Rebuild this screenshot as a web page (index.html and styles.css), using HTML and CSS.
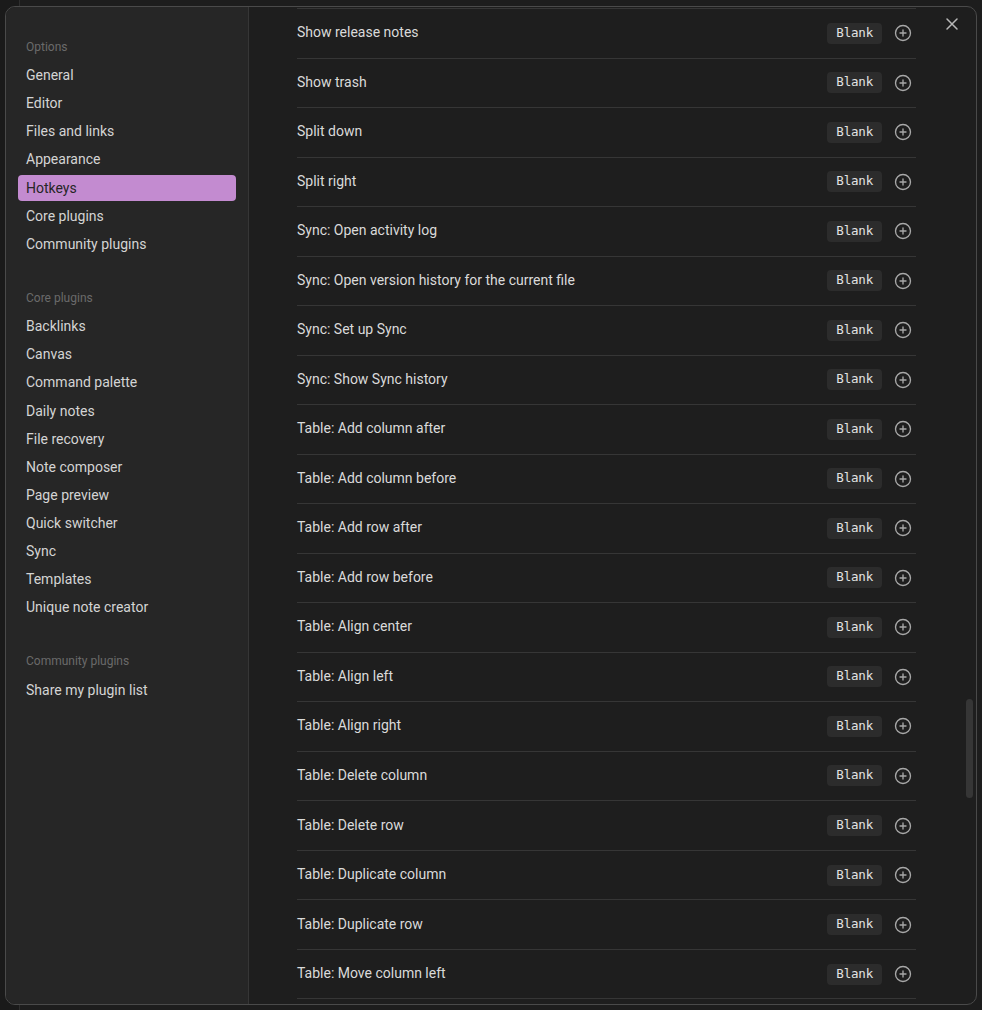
FILE: index.html
```html
<!DOCTYPE html>
<html lang="en">
<head>
<meta charset="utf-8">
<title>Settings - Hotkeys</title>
<link rel="stylesheet" href="styles.css">
</head>
<body>
<div class="modal">
  <nav class="sidebar">
    <div class="nav-group">
      <div class="nav-header">Options</div>
      <div class="nav-item">General</div>
      <div class="nav-item">Editor</div>
      <div class="nav-item">Files and links</div>
      <div class="nav-item">Appearance</div>
      <div class="nav-item is-active">Hotkeys</div>
      <div class="nav-item">Core plugins</div>
      <div class="nav-item">Community plugins</div>
    </div>
    <div class="nav-group">
      <div class="nav-header">Core plugins</div>
      <div class="nav-item">Backlinks</div>
      <div class="nav-item">Canvas</div>
      <div class="nav-item">Command palette</div>
      <div class="nav-item">Daily notes</div>
      <div class="nav-item">File recovery</div>
      <div class="nav-item">Note composer</div>
      <div class="nav-item">Page preview</div>
      <div class="nav-item">Quick switcher</div>
      <div class="nav-item">Sync</div>
      <div class="nav-item">Templates</div>
      <div class="nav-item">Unique note creator</div>
    </div>
    <div class="nav-group">
      <div class="nav-header">Community plugins</div>
      <div class="nav-item">Share my plugin list</div>
    </div>
  </nav>
  <main class="content">
    <div class="hotkey-list" id="list"></div>
  </main>
  <button class="close-btn" aria-label="Close">
    <svg width="20" height="20" viewBox="0 0 24 24" fill="none" stroke="currentColor" stroke-width="1.8" stroke-linecap="round"><path d="M18 6 6 18M6 6l12 12"/></svg>
  </button>
  <div class="scroll-thumb"></div>
</div>
<script>
const names = [
  "Show release notes","Show trash","Split down","Split right",
  "Sync: Open activity log","Sync: Open version history for the current file",
  "Sync: Set up Sync","Sync: Show Sync history",
  "Table: Add column after","Table: Add column before","Table: Add row after","Table: Add row before",
  "Table: Align center","Table: Align left","Table: Align right",
  "Table: Delete column","Table: Delete row","Table: Duplicate column","Table: Duplicate row",
  "Table: Move column left"
];
const list = document.getElementById('list');
for (const n of names) {
  const row = document.createElement('div');
  row.className = 'hotkey-row';
  row.innerHTML = '<div class="hotkey-name"></div><kbd class="hotkey-key">Blank</kbd>' +
    '<button class="add-btn" aria-label="Add hotkey"><svg width="18" height="18" viewBox="0 0 24 24" fill="none" stroke="currentColor" stroke-width="1.8" stroke-linecap="round"><circle cx="12" cy="12" r="10"/><path d="M12 8v8M8 12h8"/></svg></button>';
  row.firstChild.textContent = n;
  list.appendChild(row);
}
</script>
</body>
</html>
```
FILE: styles.css
```css
html, body {
  margin: 0;
  padding: 0;
}
body {
  background: linear-gradient(90deg, #1a1a1a 19px, #2e2e2e 19px, #2e2e2e 20px, #1d1d1d 20px);
  font-family: Roboto, "Noto Sans", sans-serif;
  font-size: 14px;
  color: #dadada;
  height: 1010px;
  overflow: hidden;
}
.modal {
  position: relative;
  box-sizing: border-box;
  width: 972px;
  height: 999px;
  margin: 6px 0 0 5px;
  border: 1px solid #4a4a4a;
  border-radius: 10px;
  display: flex;
  overflow: hidden;
  background: #1e1e1e;
}
.sidebar {
  flex: 0 0 243px;
  box-sizing: border-box;
  background: #262626;
  border-right: 1px solid #363636;
  padding: 31.5px 12px 0;
}
.nav-group + .nav-group {
  margin-top: 32.2px;
}
.nav-header {
  height: 16px;
  line-height: 16px;
  font-size: 12px;
  color: #6a6a6a;
  padding: 0 8px;
  margin-bottom: 7.7px;
}
.nav-item {
  height: 26.67px;
  line-height: 26.67px;
  padding: 0 8px;
  margin-bottom: 1.45px;
  border-radius: 4px;
  color: #d4d4d4;
  white-space: nowrap;
}
.nav-item.is-active {
  background: #c38bd0;
  color: #262626;
}
.content {
  flex: 1;
  padding: 1px 60px 0 48px;
  overflow: hidden;
}
.hotkey-row {
  box-sizing: border-box;
  height: 49.53px;
  border-top: 1px solid #363636;
  display: flex;
  align-items: center;
}
.hotkey-row:last-child {
  height: 50.53px;
  border-bottom: 1px solid #363636;
}
.hotkey-name {
  flex: 1;
  padding-bottom: 2px;
  color: #dadada;
}
.hotkey-key {
  box-sizing: border-box;
  font-family: "DejaVu Sans Mono", monospace;
  font-size: 12.5px;
  letter-spacing: -0.2px;
  height: 21px;
  line-height: 19px;
  padding: 0 9px 2px;
  border-radius: 4px;
  background: #2c2c2c;
  color: #e2e2e2;
}
.add-btn {
  width: 24px;
  height: 24px;
  margin: 0 1px 0 9px;
  padding: 0;
  border: 0;
  background: none;
  color: #a8a8a8;
  display: flex;
  align-items: center;
  justify-content: center;
}
.close-btn {
  position: absolute;
  top: 5px;
  right: 12px;
  width: 24px;
  height: 24px;
  padding: 0;
  border: 0;
  background: none;
  color: #b8b8b8;
  display: flex;
  align-items: center;
  justify-content: center;
}
.scroll-thumb {
  position: absolute;
  top: 692px;
  right: 3px;
  width: 7px;
  height: 99px;
  border-radius: 4px;
  background: #363636;
}
```
